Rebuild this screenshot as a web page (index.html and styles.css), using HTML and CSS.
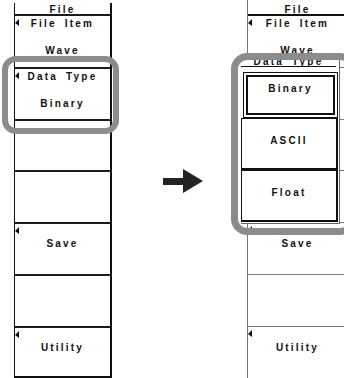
FILE: index.html
```html
<!DOCTYPE html>
<html>
<head>
<meta charset="utf-8">
<link rel="stylesheet" href="styles.css">
</head>
<body>
<div class="stage">
  <section class="panel panel--left">
    <div class="head">File</div>
    <div class="row"><span class="tri"></span><div class="title">File Item</div><div class="value">Wave</div></div>
    <div class="row"><span class="tri"></span><div class="title">Data Type</div><div class="value">Binary</div></div>
    <div class="row"></div>
    <div class="row"></div>
    <div class="row"><span class="tri"></span><div class="action">Save</div></div>
    <div class="row"></div>
    <div class="row"><span class="tri"></span><div class="action">Utility</div></div>
  </section>
  <div class="gap">
    <svg class="arrow" width="40" height="24" viewBox="0 0 40 24"><rect x="0" y="9" width="21" height="7" fill="#222"/><polygon points="20,0 40,12 20,24" fill="#222"/></svg>
  </div>
  <section class="panel panel--right">
    <div class="head">File</div>
    <div class="row"><span class="tri"></span><div class="title">File Item</div><div class="value">Wave</div></div>
    <div class="row"><span class="tri"></span><div class="title">Data Type</div><div class="value">Binary</div></div>
    <div class="row"></div>
    <div class="row"></div>
    <div class="row"><span class="tri"></span><div class="action">Save</div></div>
    <div class="row"></div>
    <div class="row"><span class="tri"></span><div class="action">Utility</div></div>
    <div class="popup">
      <div class="popup-title">Data Type</div>
      <div class="opt opt--sel">Binary</div>
      <div class="opt">ASCII</div>
      <div class="opt">Float</div>
    </div>
  </section>
  <div class="ring ring--left"></div>
  <div class="ring ring--right"></div>
</div>
</body>
</html>
```
FILE: styles.css
```css
body {
  margin: 0;
  background: #fff;
  font-family: "Liberation Sans", Arial, sans-serif;
  font-weight: 700;
  font-size: 10px;
  color: #111;
  letter-spacing: 2.2px;
  word-spacing: 3px;
}
.stage {
  position: relative;
  display: flex;
  align-items: flex-start;
  width: 344px;
  height: 378px;
  overflow: hidden;
}
.panel {
  display: grid;
  box-sizing: border-box;
  flex: none;
}
.panel--left {
  margin: 3px 0 0 14px;
  width: 98px;
  height: 375px;
  border-left: 1px solid #111;
  border-right: 2px solid #111;
  border-bottom: 2px solid #111;
  grid-template-rows: 11px 53px 52px 51px 52px 52px 52px 50px;
}
.panel--right {
  position: relative;
  width: 100px;
  height: 378px;
  border-left: 1px solid #777;
  grid-template-rows: 14px 53px 52px 51px 52px 52px 52px 52px;
}
.head {
  box-sizing: border-box;
  text-align: center;
  padding-top: 3px;
  line-height: 8px;
}
.panel--right .head { padding-top: 6px; }
.row {
  position: relative;
  box-sizing: border-box;
  border-top: 2px solid #1a1a1a;
  padding-top: 3px;
}
.panel--right .row {
  border-top: 1px solid #777;
  padding-top: 4px;
}
.panel--right .row:nth-child(2) {
  border-top: 2px solid #111;
  padding-top: 3px;
}
.title, .value, .action {
  line-height: 10px;
  text-align: center;
  white-space: nowrap;
}
.value { margin-top: 17px; }
.action { margin-top: 12px; }
.tri {
  position: absolute;
  left: 0;
  top: 3px;
  width: 0;
  height: 0;
  border-right: 4px solid #111;
  border-top: 4px solid transparent;
  border-bottom: 3px solid transparent;
}
.gap {
  flex: none;
  box-sizing: border-box;
  width: 135px;
  padding: 169px 0 0 51px;
}
.arrow { display: block; }
.popup {
  position: absolute;
  left: -7px;
  top: 59px;
  width: 99px;
  height: 165px;
  box-sizing: border-box;
  background: #fff;
  border-right: 1px solid #666;
  border-bottom: 1px solid #666;
  display: flex;
  flex-direction: column;
}
.popup-title {
  height: 7px;
  line-height: 6px;
  margin-right: 3px;
  text-align: center;
  border-bottom: 1px solid #111;
}
.opt {
  box-sizing: border-box;
  flex: none;
  height: 52px;
  margin-right: 1px;
  padding-top: 17px;
  line-height: 10px;
  text-align: center;
  border-left: 1px solid #111;
  border-top: 1px solid #111;
  border-right: 2px solid #111;
  border-bottom: 2px solid #111;
}
.opt--sel {
  height: 46px;
  margin: 5px 1px 0 2px;
  padding-top: 11px;
  border: 1px solid #111;
  box-shadow: inset 0 0 0 2px #fff, inset 0 0 0 4px #111;
}
.ring {
  position: absolute;
  box-sizing: border-box;
  border: 6px solid #8c8c8c;
  border-radius: 14px;
}
.ring--left {
  left: 2px;
  top: 56px;
  width: 117px;
  height: 78px;
}
.ring--right {
  left: 231px;
  top: 53px;
  width: 125px;
  height: 182px;
  border-width: 7px;
  border-radius: 16px;
}
```
